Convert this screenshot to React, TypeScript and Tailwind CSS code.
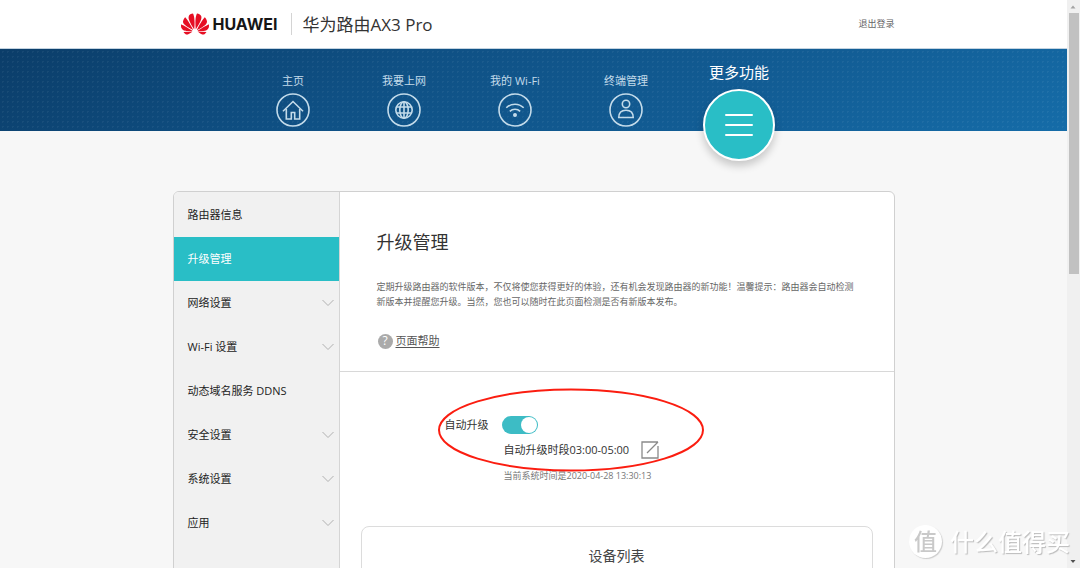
import { useState } from "react";
import type { ReactNode } from "react";
import { SiHuawei } from "react-icons/si";

type NavItem = {
	label: string;
	icon: ReactNode;
};

type MenuItem = {
	label: string;
	expandable?: boolean;
};

const NAV_ITEMS: NavItem[] = [
	{
		label: "主页",
		icon: (
			<>
				<path d="M7 18.2 17 8.500l10 9.700" />
				<path d="M10.300 16v10h5v-6.500h3.400V26h5V16" />
			</>
		),
	},
	{
		label: "我要上网",
		icon: (
			<>
				<circle cx="17" cy="17" r="8.200" />
				<ellipse cx="17" cy="17" rx="4.200" ry="8.200" />
				<path d="M17 9v16M9.500 14h15M9.500 20h15" />
			</>
		),
	},
	{
		label: "我的 Wi-Fi",
		icon: (
			<>
				<path d="M8.300 14.800c4.900-4.800 12.500-4.800 17.400 0" />
				<path d="M11.800 18.300c2.900-2.800 7.500-2.800 10.400 0" />
				<circle cx="17" cy="22" r="1.200" fill="currentColor" />
			</>
		),
	},
	{
		label: "终端管理",
		icon: (
			<>
				<circle cx="17" cy="11" r="3.700" />
				<path d="M9.800 24.500c0-4.600 2.900-7.200 7.200-7.200s7.200 2.600 7.200 7.200z" />
			</>
		),
	},
];

const MENU_ITEMS: MenuItem[] = [
	{ label: "路由器信息" },
	{ label: "升级管理" },
	{ label: "网络设置", expandable: true },
	{ label: "Wi-Fi 设置", expandable: true },
	{ label: "动态域名服务 DDNS" },
	{ label: "安全设置", expandable: true },
	{ label: "系统设置", expandable: true },
	{ label: "应用", expandable: true },
];

const Header = () => (
	<header className="border-b border-[#c3d3e0] bg-white">
		<div className="mx-auto flex h-12 max-w-[722px] items-center pl-2">
			<a href="#home" className="flex items-center">
				<SiHuawei className="size-7 text-[#e60f24]" aria-hidden="true" />
				<span className="ml-1 font-['Inter'] text-base font-bold text-[#161616]">
					HUAWEI
				</span>
			</a>
			<span className="ml-[14px] h-[22px] w-px bg-[#d4d4d4]" />
			<h1 className="ml-[10px] text-[17px] leading-none text-[#333]">
				华为路由AX3 Pro
			</h1>
			<a href="#logout" className="ml-auto text-[9px] text-[#666]">
				退出登录
			</a>
		</div>
	</header>
);

const NavBar = () => (
	<nav className="h-[82px] bg-[radial-gradient(circle,rgba(255,255,255,0.05)_1px,transparent_1px),linear-gradient(150deg,#0b3d69_0%,#0f5084_35%,#125d95_70%,#156ca8_100%)] bg-[length:5px_5px,100%_100%]">
		<div className="mx-auto flex max-w-[722px] items-start pl-[65px]">
			{NAV_ITEMS.map((item) => (
				<a
					key={item.label}
					href="#nav"
					className="flex w-[111px] flex-col items-center gap-1 pt-6 text-[#c3dbea]"
				>
					<span className="text-[11px] leading-4">{item.label}</span>
					<svg
						viewBox="0 0 34 34"
						className="size-[34px]"
						fill="none"
						stroke="currentColor"
						strokeWidth="1.6"
						aria-hidden="true"
					>
						<circle cx="17" cy="17" r="16" />
						{item.icon}
					</svg>
				</a>
			))}
			<a
				href="#more"
				className="flex w-[115px] flex-col items-center gap-[7px] pt-[13px] text-white"
			>
				<span className="text-[15px] leading-5">更多功能</span>
				<span className="flex size-[72px] items-center justify-center rounded-full border-2 border-white bg-[#29bec6] shadow-[0_5px_9px_rgba(0,0,0,0.2)]">
					<svg
						viewBox="0 0 28 24"
						className="h-6 w-7"
						stroke="currentColor"
						strokeWidth="2"
						strokeLinecap="round"
						aria-hidden="true"
					>
						<path d="M1 2h26M1 12h26M1 22h26" />
					</svg>
				</span>
			</a>
		</div>
	</nav>
);

const SideMenu = () => {
	const [active, setActive] = useState("升级管理");

	return (
		<aside className="w-[166px] shrink-0 border-r border-[#d5d5d5] bg-[#f1f1f1] pt-px">
			{MENU_ITEMS.map((item) => (
				<button
					key={item.label}
					type="button"
					onClick={() => setActive(item.label)}
					className={`flex h-11 w-full items-center justify-between pr-[5px] pl-[14px] text-[11px] ${
						active === item.label
							? "bg-[#29bec6] text-white"
							: "text-[#222]"
					}`}
				>
					{item.label}
					{item.expandable && (
						<svg
							viewBox="0 0 12 8"
							className="h-2 w-3"
							fill="none"
							stroke="#b0b0b0"
							aria-hidden="true"
						>
							<path d="m.500 1 5.500 5.500L11.500 1" />
						</svg>
					)}
				</button>
			))}
		</aside>
	);
};

const UpgradePanel = () => {
	const [autoUpgrade, setAutoUpgrade] = useState(true);

	return (
		<div className="min-w-0 flex-1">
			<section className="border-b border-[#d8d8d8] px-[37px] pt-[38px] pb-[22px]">
				<h2 className="text-lg leading-6 text-[#333]">升级管理</h2>
				<p className="mt-[25px] text-[9px] leading-[15px] text-[#666]">
					定期升级路由器的软件版本，不仅将使您获得更好的体验，还有机会发现路由器的新功能！温馨提示：路由器会自动检测新版本并提醒您升级。当然，您也可以随时在此页面检测是否有新版本发布。
				</p>
				<a
					href="#help"
					className="mt-6 flex items-center gap-[3px] pl-px text-[11px] leading-4 text-[#555]"
				>
					<span className="flex size-[15px] items-center justify-center rounded-full bg-[#aaa] text-[12px] text-white">
						?
					</span>
					<span className="underline underline-offset-2">页面帮助</span>
				</a>
			</section>

			<section className="px-[21px] pt-11">
				<div className="relative ml-[84px] text-[11px] text-[#333]">
					<div className="flex h-[18px] items-center gap-[13px]">
						<label htmlFor="auto-upgrade">自动升级</label>
						<input
							id="auto-upgrade"
							type="checkbox"
							checked={autoUpgrade}
							onChange={(e) => setAutoUpgrade(e.target.checked)}
							className="flex h-[18px] w-9 appearance-none items-center justify-start rounded-full bg-[#bbb] px-px before:size-4 before:rounded-full before:bg-white checked:justify-end checked:bg-[#3dbcc5]"
						/>
					</div>
					<div className="mt-[7px] ml-[59px] flex h-[18px] items-center gap-3">
						<span>自动升级时段03:00-05:00</span>
						<button type="button" aria-label="编辑升级时段">
							<svg
								viewBox="0 0 18 18"
								className="size-[18px]"
								fill="none"
								stroke="#8a8a8a"
								strokeWidth="1.3"
								aria-hidden="true"
							>
								<path d="M17 1H1v16h16V5M6 12 17 1" />
							</svg>
						</button>
					</div>
					<p className="mt-[9px] ml-[59px] text-[9px] leading-4 text-[#777]">
						当前系统时间是2020-04-28 13:30:13
					</p>
					<svg
						viewBox="0 0 268 84"
						className="pointer-events-none absolute -top-7 -left-2 h-[84px] w-[268px]"
						fill="none"
						stroke="#fb1d10"
						strokeWidth="2"
						aria-hidden="true"
					>
						<ellipse cx="134" cy="42" rx="132" ry="40.500" />
					</svg>
				</div>

				<div className="mt-[42px] h-60 rounded-lg border border-[#dcdcdc] pt-[17px]">
					<h3 className="text-center text-sm leading-6 text-[#444]">设备列表</h3>
				</div>
			</section>
		</div>
	);
};

const ScrollRail = () => (
	<div
		className="flex w-[13px] shrink-0 flex-col items-center justify-between bg-[#f0f0f0]"
		aria-hidden="true"
	>
		<svg viewBox="0 0 13 13" className="size-[13px]" fill="#a3a3a3">
			<path d="M3.500 8.500h5L6 5.500z" />
		</svg>
		<div className="h-[261px] w-[10px] bg-[#c1c1c1]" />
		<div className="flex-1" />
		<svg viewBox="0 0 13 13" className="size-[13px]" fill="#505050">
			<path d="M3.500 5h5L6 8z" />
		</svg>
	</div>
);

const Watermark = () => (
	<div className="pointer-events-none fixed right-[10px] bottom-[10px] flex items-center gap-2 text-white">
		<span className="flex size-[33px] items-center justify-center rounded-full bg-white text-[23px] leading-none font-medium text-[#c9c9c9] shadow-[1px_1px_1px_#ccc]">
			值
		</span>
		<span className="text-2xl leading-none font-medium text-shadow-[1px_1px_1px_#bbb]">
			什么值得买
		</span>
	</div>
);

const App = () => {
	return (
		<div className="flex h-screen overflow-hidden bg-[#f7f7f7] font-['Open_Sans','Noto_Sans_CJK_SC',sans-serif]">
			<div className="min-w-0 flex-1 overflow-hidden">
				<Header />
				<NavBar />
				<main className="mx-auto mt-[60px] flex max-w-[722px] overflow-hidden rounded-md border border-[#d0d0d0] bg-white">
					<SideMenu />
					<UpgradePanel />
				</main>
			</div>
			<ScrollRail />
			<Watermark />
		</div>
	);
};

export default App;
